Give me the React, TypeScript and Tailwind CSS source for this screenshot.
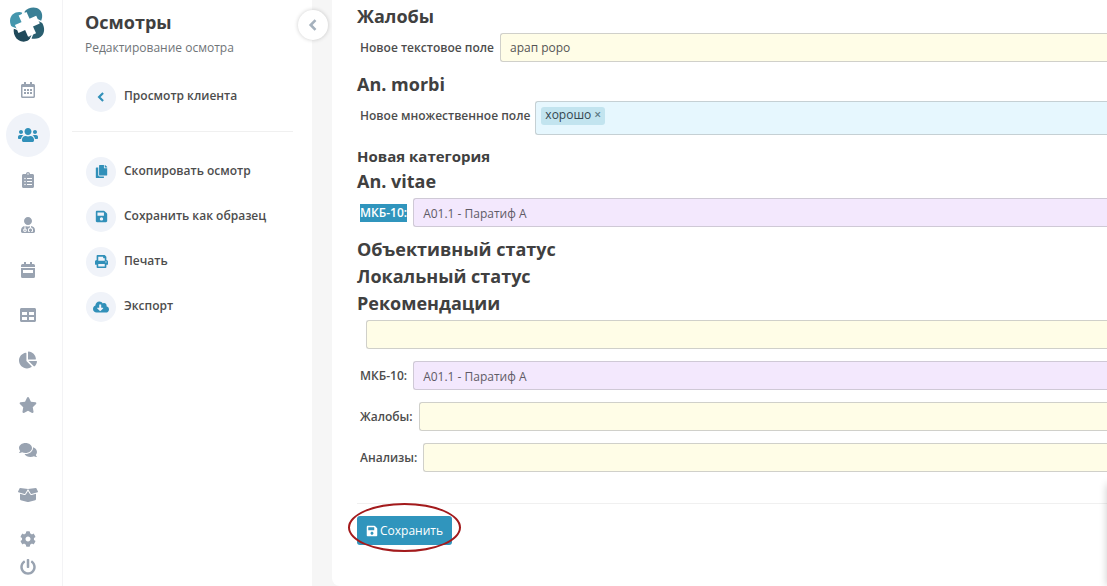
import type { ReactNode } from "react";
import type { IconType } from "react-icons";
import {
  FaBoxOpen,
  FaChartPie,
  FaClipboardList,
  FaCloudDownloadAlt,
  FaCog,
  FaComments,
  FaCopy,
  FaPowerOff,
  FaPrint,
  FaRegCalendarAlt,
  FaSave,
  FaStar,
  FaTable,
  FaUserMd,
  FaUsers,
} from "react-icons/fa";

interface IconProps {
  size?: number;
}

const CalendarBand = ({ size = 16 }: IconProps) => (
  <svg width={size} height={size} viewBox="0 0 16 16" fill="currentColor">
    <path d="M4 0h2v2h4V0h2v2h1.5A1.5 1.5 0 0 1 15 3.500V5H1V3.500A1.500 1.500 0 0 1 2.500 2H4z" />
    <path
      fillRule="evenodd"
      d="M1 6h14v8.500a1.500 1.500 0 0 1-1.500 1.500h-11A1.500 1.500 0 0 1 1 14.500zM3 8v3h10V8z"
    />
  </svg>
);

const Chevron = ({ size = 12 }: IconProps) => (
  <svg width={size} height={size} viewBox="0 0 12 12" fill="none" stroke="currentColor" strokeWidth="2.600">
    <path d="M8.500 1.200L3.700 6l4.800 4.800" />
  </svg>
);

interface NavItem {
  label: string;
  icon: IconType | typeof CalendarBand;
  size?: number;
  active?: boolean;
}

const navItems: NavItem[] = [
  { label: "Расписание", icon: FaRegCalendarAlt },
  { label: "Клиенты", icon: FaUsers, size: 20, active: true },
  { label: "Задачи", icon: FaClipboardList },
  { label: "Врачи", icon: FaUserMd },
  { label: "Календарь", icon: CalendarBand },
  { label: "Таблицы", icon: FaTable },
  { label: "Отчёты", icon: FaChartPie, size: 18 },
  { label: "Избранное", icon: FaStar, size: 18 },
  { label: "Сообщения", icon: FaComments, size: 18 },
  { label: "Склад", icon: FaBoxOpen, size: 20 },
];

const Logo = () => (
  <svg width="44" height="44" viewBox="0 0 132 132">
    <path fill="#4496ad" d="M50 27C36 19 12 30 12 50c0 10 4 18 9 23l34 0 16-26z" />
    <path fill="#3a8096" d="M56 22C66 9 90 6 101 17c10 10 9 25 3 36L74 62 56 44z" />
    <path fill="#2a5f70" d="M106 54c9 10 12 28 3 40-8 11-25 13-36 8L66 74l20-18z" />
    <path fill="#20495a" d="M23 76c-1 16 7 32 22 36 12 3 23-1 27-9L68 76 44 66z" />
    <g fill="#fff" transform="rotate(-24 64 61)">
      <rect x="51" y="26" width="26" height="70" />
      <rect x="29" y="48" width="70" height="26" />
    </g>
    <path stroke="#fff" strokeWidth="4" d="M48 33l9-20M94 47l18 9M80 90l-9 22M34 76l-21-8" />
  </svg>
);

const Sidebar = () => (
  <nav className="flex w-[63px] shrink-0 flex-col border-r border-[#f3f3f5]">
    <a href="#" aria-label="Главная" className="mt-1 mb-[19px] ml-1.5 block h-11 w-11">
      <Logo />
    </a>
    {navItems.map(({ label, icon: Icon, size = 16, active }) => (
      <a key={label} href="#" aria-label={label} className="flex h-[45px] w-14 items-center justify-center">
        <span
          className={
            active
              ? "flex h-11 w-11 items-center justify-center rounded-full bg-[#f0f3f9] text-[#3190b9]"
              : "text-[#99a3b1]"
          }
        >
          <Icon size={size} />
        </span>
      </a>
    ))}
    <a href="#" aria-label="Настройки" className="mt-2 flex h-7 w-14 items-center justify-center text-[#99a3b1]">
      <FaCog size={16} />
    </a>
    <a href="#" aria-label="Выход" className="flex h-7 w-14 items-center justify-center text-[#99a3b1]">
      <FaPowerOff size={16} />
    </a>
  </nav>
);

interface ActionProps {
  icon: IconType | typeof Chevron;
  size?: number;
  children: ReactNode;
}

const Action = ({ icon: Icon, size = 13, children }: ActionProps) => (
  <button className="flex h-[45px] items-center gap-2 text-left">
    <span className="flex h-[30px] w-[30px] items-center justify-center rounded-full bg-[#f0f3f9] text-[#3190b9]">
      <Icon size={size} />
    </span>
    <span className="pb-0.5 text-[12px] font-semibold text-[#4d4d4d]">{children}</span>
  </button>
);

const ActionsPanel = () => (
  <aside className="relative w-[249px] shrink-0 px-[9px] pt-[11px]">
    <div className="pl-[13px]">
      <h1 className="text-[18px] leading-[22px] font-bold text-[#404040]">Осмотры</h1>
      <p className="mt-[5px] text-[12px] leading-5 text-[#6f7478]">Редактирование осмотра</p>
    </div>
    <div className="mt-4 flex flex-col pb-3 pl-3.5">
      <Action icon={Chevron} size={10}>
        Просмотр клиента
      </Action>
    </div>
    <hr className="mr-2.5 border-[#f0f0f0]" />
    <div className="mt-[17px] flex flex-col pl-3.5">
      <Action icon={FaCopy}>Скопировать осмотр</Action>
      <Action icon={FaSave}>Сохранить как образец</Action>
      <Action icon={FaPrint}>Печать</Action>
      <Action icon={FaCloudDownloadAlt} size={16}>
        Экспорт
      </Action>
    </div>
    <button
      aria-label="Свернуть панель"
      className="absolute top-2.5 -right-4 z-10 flex h-[30px] w-[30px] items-center justify-center rounded-full bg-white text-[#a5b1bd] shadow-[0_0_4px_rgba(0,0,0,0.2)]"
    >
      <Chevron size={12} />
    </button>
  </aside>
);

const Heading = ({ children }: { children: ReactNode }) => (
  <h2 className="text-[18px] leading-[27px] font-bold text-[#404040]">{children}</h2>
);

const fieldTones = {
  yellow: "border-[#d0d0ca] bg-[#fffde7] text-[#555]",
  purple: "border-[#cfc9d6] bg-[#f3e8fd] pt-0.5 text-[#5f5b66]",
};

interface FieldProps {
  id: string;
  label?: string;
  value?: string;
  tone?: keyof typeof fieldTones;
  selected?: boolean;
}

const Field = ({ id, label, value = "", tone = "yellow", selected }: FieldProps) => (
  <div className="flex items-center gap-1.5 pt-[3px] pb-[9px] pl-[3px]">
    <label
      htmlFor={id}
      className={
        selected
          ? "bg-[#3095bd] text-[12px] leading-[18px] font-semibold text-white"
          : "text-[12px] leading-[18px] font-semibold text-[#4d4d4d]"
      }
    >
      {label}
    </label>
    <input
      id={id}
      aria-label={label ? undefined : "Рекомендации"}
      defaultValue={value}
      className={`h-[29px] min-w-0 flex-1 rounded-l-[3px] border border-r-0 px-[9px] text-[12px] outline-none ${fieldTones[tone]}`}
    />
  </div>
);

const TagsField = () => (
  <div className="flex items-center gap-[5px] pt-[3px] pb-[9px] pl-[3px]">
    <label htmlFor="tags" className="pb-1 text-[12px] leading-[18px] font-semibold text-[#4d4d4d]">
      Новое множественное поле
    </label>
    <div className="flex h-[34px] min-w-0 flex-1 items-start rounded-l-[3px] border border-r-0 border-[#c5d0d4] bg-[#e6f7fe] px-[5px] pt-[5px]">
      <span className="flex h-[18px] items-center gap-[3px] rounded-[3px] bg-[#c2e4ef] px-1 text-[12px] leading-[18px] text-[#33474f]">
        <span className="pb-0.5">хорошо</span>
        <button aria-label="Удалить хорошо" className="pb-0.5 font-semibold leading-4 text-[#5d7882]">
          ×
        </button>
      </span>
      <input id="tags" className="h-[18px] min-w-0 flex-1 bg-transparent px-1 text-[12px] outline-none" />
    </div>
  </div>
);

const App = () => {
  return (
    <div className="relative flex min-h-screen overflow-hidden bg-white font-['Open_Sans','Noto_Sans',sans-serif]">
      <Sidebar />
      <ActionsPanel />
      <div className="flex min-w-0 flex-1 bg-[#f6f6f6] pl-5">
        <main className="min-w-0 flex-1 rounded-bl-lg bg-white pt-[3px] pb-10 pl-[25px]">
          <Heading>Жалобы</Heading>
          <Field id="text-field" label="Новое текстовое поле" value="арап роро" />
          <Heading>An. morbi</Heading>
          <TagsField />
          <h3 className="text-[15px] leading-6 font-bold text-[#404040]">Новая категория</h3>
          <Heading>An. vitae</Heading>
          <Field id="mkb-1" label="МКБ-10:" value="A01.1 - Паратиф A" tone="purple" selected />
          <Heading>Объективный статус</Heading>
          <Heading>Локальный статус</Heading>
          <Heading>Рекомендации</Heading>
          <Field id="recommendations" />
          <Field id="mkb-2" label="МКБ-10:" value="A01.1 - Паратиф A" tone="purple" />
          <Field id="complaints" label="Жалобы:" />
          <Field id="analyses" label="Анализы:" />
          <hr className="mt-[22px] border-[#f0f0f0]" />
          <div className="relative mt-3 inline-block">
            <button className="flex h-[29px] items-center gap-0.5 rounded-[3px] bg-[#3095bd] px-[9px] text-[12px] text-white">
              <FaSave size={12} />
              Сохранить
            </button>
            <span className="pointer-events-none absolute -inset-x-[9px] -top-[13px] h-[49px] rounded-[50%] border-2 border-[#a31a1c]" />
          </div>
        </main>
      </div>
      {/* edge of the slide-out drawer */}
      <div className="absolute top-[484px] bottom-0 left-full w-10 shadow-[0_0_8px_rgba(0,0,0,0.2)]" />
    </div>
  );
};

export default App;
